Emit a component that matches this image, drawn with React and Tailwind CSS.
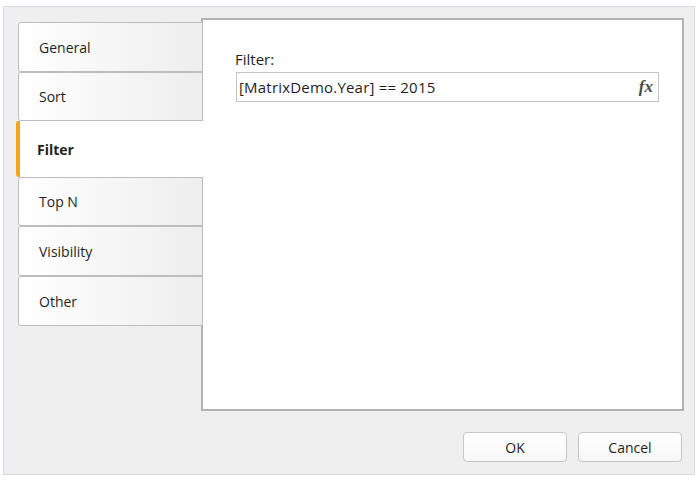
import React from 'react';

const tabs = [
  { label: 'General', h: 'h-[50px]' },
  { label: 'Sort', h: 'h-[49px]' },
  { label: 'Filter', h: 'h-[56px]', active: true },
  { label: 'Top N', h: 'h-[49px]' },
  { label: 'Visibility', h: 'h-[50px]' },
  { label: 'Other', h: 'h-[50px]' },
];

const App = () => {
  return (
    <div className="w-[698px] h-[481px] bg-white pt-[6px] pl-[3px] font-['Open_Sans',sans-serif] text-[#1f1f24]">
      <div className="w-[692px] h-[469px] border border-[#d6dbe3] bg-[#efefef] flex flex-col">
        {/* Tabs + page */}
        <div className="flex pt-[11px] pl-[12px]">
          <div className="relative z-10 w-[186px] pt-[4px] flex flex-col">
            {tabs.map(tab =>
              tab.active ? (
                <div
                  key={tab.label}
                  className={`${tab.h} w-[187px] bg-white border-l-4 border-[#f5a31a] rounded-l-[3px] pl-[17px] flex items-center text-[14px] font-bold`}
                >
                  {tab.label}
                </div>
              ) : (
                <div
                  key={tab.label}
                  className={`${tab.h} ml-[2px] w-[185px] border border-[#bdbdbd] rounded-l-[3px] bg-gradient-to-r from-white to-[#eeeeee] pl-[20px] flex items-center text-[14px]`}
                >
                  {tab.label}
                </div>
              )
            )}
          </div>

          <div className="-ml-[1px] w-[483px] h-[393px] bg-white border-2 border-[#b2b2b2] pt-[29px] pl-[33px]">
            <div className="text-[15px] leading-[20px] mb-[3px] -ml-[1px]">Filter:</div>
            <div className="w-[423px] h-[30px] border border-[#c3c3c8] flex items-center justify-between pl-[2px] pr-[5px]">
              <span className="text-[15px] leading-[20px] tracking-[0.2px]">[MatrixDemo.Year] == 2015</span>
              <span className="font-['Liberation_Serif',serif] italic font-bold text-[17px] leading-[20px] text-[#4a4a4a]">fx</span>
            </div>
          </div>
        </div>

        {/* Buttons */}
        <div className="flex justify-end gap-[11px] mt-[21px] pr-[12px]">
          <button className="w-[104px] h-[30px] rounded-[4px] border border-[#c6c6c6] bg-gradient-to-b from-white to-[#f7f7f7] text-[14px] text-[#1f1f24]">
            OK
          </button>
          <button className="w-[104px] h-[30px] rounded-[4px] border border-[#c6c6c6] bg-gradient-to-b from-white to-[#f7f7f7] text-[14px] text-[#1f1f24]">
            Cancel
          </button>
        </div>
      </div>
    </div>
  );
};

export default App;
